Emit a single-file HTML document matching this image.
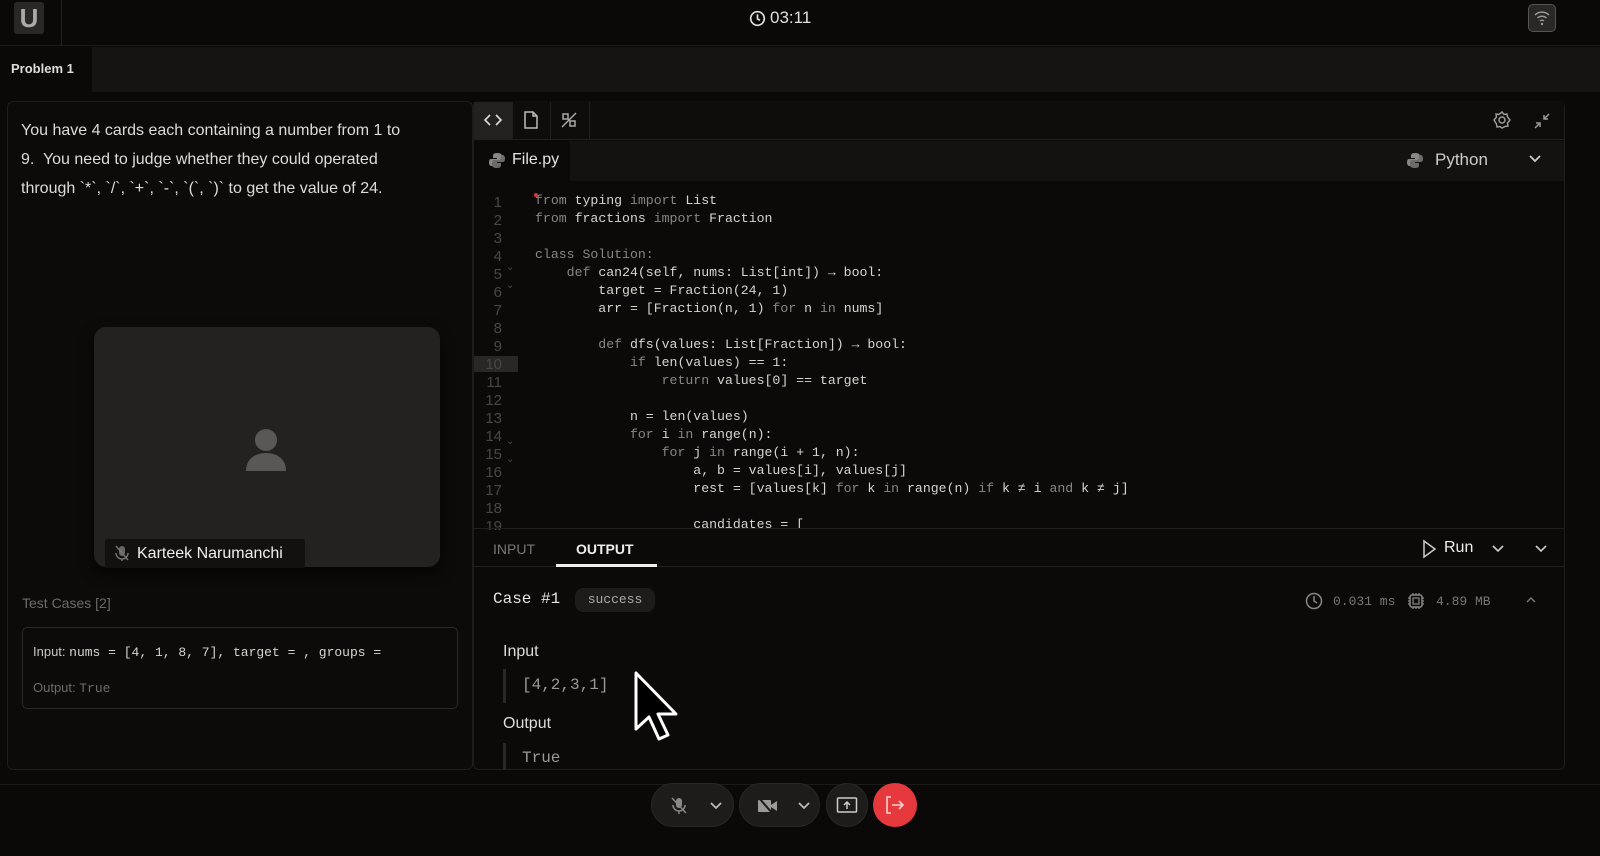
<!DOCTYPE html>
<html><head><meta charset="utf-8"><style>
*{box-sizing:border-box;margin:0;padding:0}
body{width:1600px;height:856px;background:#0b0907;color:#ddd;font-family:"Liberation Sans",sans-serif;position:relative;overflow:hidden}
.abs{position:absolute}
.mono{font-family:"Liberation Mono",monospace}
.code div{height:18px;line-height:18px;white-space:pre}
.k{color:#8a8580}
.w{color:#d8d4cf}
.ln div{height:18px;line-height:18px;color:#4a4643;font-size:15px;text-align:right}
svg{display:block}
</style></head><body>
<div class="abs" style="left:0;top:0;width:1600px;height:46px;background:#0b0907;border-bottom:1px solid #1c1a18"></div>
<div class="abs" style="left:14px;top:2px;width:30px;height:32px;background:#2a2826;border-radius:3px;color:#aaa;font-weight:bold;font-size:26px;text-align:center;line-height:32px">U</div>
<div class="abs" style="left:61px;top:0;width:1px;height:46px;background:#222"></div>
<div class="abs" style="left:749px;top:8px;font-size:17px;color:#e0e0e0;display:flex;align-items:center;gap:4px">
<svg width="17" height="17" viewBox="0 0 20 20"><circle cx="10" cy="10" r="8" fill="none" stroke="#ddd" stroke-width="2"/><path d="M10 5v5.5l3 1.5" stroke="#ddd" stroke-width="2" fill="none"/></svg>03:11</div>
<div class="abs" style="left:1528px;top:4px;width:28px;height:28px;border:1px solid #555;border-radius:5px;background:#2a2826">
<svg width="26" height="26" viewBox="0 0 26 26"><path d="M6 10a10 10 0 0 1 14 0M8.5 13a6.5 6.5 0 0 1 9 0M11 16a3 3 0 0 1 4 0" stroke="#999" stroke-width="1.5" fill="none"/><circle cx="13" cy="19" r="1.2" fill="#999"/></svg></div>
<div class="abs" style="left:92px;top:47px;width:1508px;height:45px;background:#161413"></div>
<div class="abs" style="left:11px;top:61px;font-size:13px;font-weight:bold;color:#ddd">Problem 1</div>
<div class="abs" style="left:7px;top:101px;width:466px;height:669px;border:1px solid #1f1d1b;border-radius:6px;background:#0d0b09"></div>
<div class="abs" style="left:21px;top:116px;font-size:16px;line-height:29px;color:#dcdcdc;white-space:nowrap">You have 4 cards each containing a number from 1 to<br>9.&nbsp; You need to judge whether they could operated<br>through `*`, `/`, `+`, `-`, `(`, `)` to get the value of 24.</div>
<div class="abs" style="left:94px;top:327px;width:346px;height:240px;background:#242220;border-radius:12px;box-shadow:0 6px 14px rgba(0,0,0,.7)"></div>
<svg class="abs" style="left:245px;top:427px" width="42" height="44" viewBox="0 0 42 44"><circle cx="21" cy="13" r="11" fill="#5a5856"/><path d="M1 44c0-12 9-18 20-18s20 6 20 18z" fill="#5a5856"/></svg>
<div class="abs" style="left:105px;top:539px;width:200px;height:29px;background:#121110;border-radius:2px;color:#eee;font-size:16px;line-height:29px;padding-left:32px">Karteek Narumanchi</div>
<svg class="abs" style="left:113px;top:544px" width="18" height="18" viewBox="0 0 18 18"><rect x="6" y="2" width="6" height="10" rx="3" fill="#666"/><path d="M3 9a6 6 0 0 0 12 0M9 15v2M3 2l12 14" stroke="#777" stroke-width="1.4" fill="none"/></svg>
<div class="abs" style="left:22px;top:595px;font-size:14px;color:#6e6a66">Test Cases [2]</div>
<div class="abs" style="left:22px;top:627px;width:436px;height:82px;border:1px solid #2a2826;border-radius:5px"></div>
<div class="abs" style="left:33px;top:644px;font-size:13px;color:#c8c4c0">Input: <span class="mono" style="color:#d8d4cf">nums = [4, 1, 8, 7], target = , groups =</span></div>
<div class="abs" style="left:33px;top:680px;font-size:13px;color:#6e6a66">Output: <span class="mono">True</span></div>
<div class="abs" style="left:473px;top:101px;width:1092px;height:669px;border:1px solid #1f1d1b;border-radius:6px;background:#0c0a08"></div>
<div class="abs" style="left:474px;top:101px;width:1090px;height:39px;background:#0f0d0b;border-bottom:1px solid #22201e"></div>
<div class="abs" style="left:474px;top:102px;width:38px;height:37px;background:#232120"></div>
<div class="abs" style="left:512px;top:102px;width:1px;height:37px;background:#22201e"></div>
<div class="abs" style="left:550px;top:102px;width:1px;height:37px;background:#22201e"></div>
<div class="abs" style="left:589px;top:102px;width:1px;height:37px;background:#22201e"></div>
<svg class="abs" style="left:483px;top:111px" width="20" height="18" viewBox="0 0 20 18"><path d="M7 4L2 9l5 5M13 4l5 5-5 5" stroke="#ddd" stroke-width="1.6" fill="none"/></svg>
<svg class="abs" style="left:522px;top:110px" width="18" height="20" viewBox="0 0 18 20"><path d="M3 2h8l4 4v12H3zM11 2v4h4" stroke="#bbb" stroke-width="1.5" fill="none"/></svg>
<svg class="abs" style="left:559px;top:110px" width="20" height="20" viewBox="0 0 20 20"><path d="M3 17L17 3M4 4h5v5H4zM11 11h5v5h-5z" stroke="#aaa" stroke-width="1.5" fill="none"/></svg>
<svg class="abs" style="left:1492px;top:110px" width="20" height="20" viewBox="0 0 20 20"><circle cx="10" cy="10" r="3" stroke="#999" stroke-width="1.5" fill="none"/><path d="M10 2l2 2.5 3-.5.5 3L18 10l-2.5 3 .5 3-3 .5L10 18l-2-1.5-3 .5-.5-3L2 10l2.5-3-.5-3 3 .5z" stroke="#999" stroke-width="1.5" fill="none"/></svg>
<svg class="abs" style="left:1532px;top:111px" width="20" height="20" viewBox="0 0 20 20"><path d="M3 17l5-5M4 12h4v4M17 3l-5 5M12 4v4h4" stroke="#999" stroke-width="1.5" fill="none"/></svg>
<div class="abs" style="left:474px;top:141px;width:1090px;height:40px;background:#141210"></div>
<div class="abs" style="left:474px;top:141px;width:96px;height:40px;background:#0c0a08"></div>
<svg class="abs" style="left:489px;top:152px" width="16" height="17" viewBox="0 0 16 17"><path d="M8 1c-4 0-4 2-4 3v2h4v1H2c-2 0-2 3-2 4s1 3 2 3h2v-2c0-2 1-3 3-3h4c1 0 2-1 2-2V4c0-2-2-3-5-3z" fill="#8a8785"/><path d="M8 16c4 0 4-2 4-3v-2H8v-1h6c2 0 2-3 2-4s-1-3-2-3h-2v2c0 2-1 3-3 3H5c-1 0-2 1-2 2v3c0 2 2 3 5 3z" fill="#6e6b69"/></svg>
<div class="abs" style="left:512px;top:151px;font-size:16px;color:#e4e4e4">File.py</div>
<svg class="abs" style="left:1407px;top:152px" width="16" height="17" viewBox="0 0 16 17"><path d="M8 1c-4 0-4 2-4 3v2h4v1H2c-2 0-2 3-2 4s1 3 2 3h2v-2c0-2 1-3 3-3h4c1 0 2-1 2-2V4c0-2-2-3-5-3z" fill="#8a8785"/><path d="M8 16c4 0 4-2 4-3v-2H8v-1h6c2 0 2-3 2-4s-1-3-2-3h-2v2c0 2-1 3-3 3H5c-1 0-2 1-2 2v3c0 2 2 3 5 3z" fill="#6e6b69"/></svg>
<div class="abs" style="left:1435px;top:150px;font-size:17px;color:#ccc">Python</div>
<svg class="abs" style="left:1528px;top:154px" width="14" height="10" viewBox="0 0 14 10"><path d="M2 2l5 5 5-5" stroke="#ccc" stroke-width="1.8" fill="none"/></svg>
<div class="abs" style="left:474px;top:356px;width:44px;height:16px;background:#2a2826"></div>
<div class="abs ln" style="left:474px;top:194px;width:28px">
<div>1</div><div>2</div><div>3</div><div>4</div><div>5</div><div>6</div><div>7</div><div>8</div><div>9</div><div>10</div><div>11</div><div>12</div><div>13</div><div>14</div><div>15</div><div>16</div><div>17</div><div>18</div><div style="height:12px;overflow:hidden">19</div></div>
<div class="abs" style="left:506px;top:259px;color:#4a4643;font-size:10px;line-height:18px">⌄<br>⌄</div>
<div class="abs" style="left:506px;top:433px;color:#4a4643;font-size:10px;line-height:18px">⌄<br>⌄</div>
<div class="abs" style="left:534px;top:193px;width:4px;height:4px;border-radius:2px;background:#d33"></div>
<div class="abs mono code" style="left:535px;top:192px;font-size:13.2px;height:336px;overflow:hidden">
<div><span class="k">from</span> <span class="w">typing</span> <span class="k">import</span> <span class="w">List</span></div>
<div><span class="k">from</span> <span class="w">fractions</span> <span class="k">import</span> <span class="w">Fraction</span></div>
<div> </div>
<div class="k">class Solution:</div>
<div><span class="k">    def</span> <span class="w">can24(self, nums: List[int]) → bool:</span></div>
<div class="w">        target = Fraction(24, 1)</div>
<div><span class="w">        arr = [Fraction(n, 1)</span> <span class="k">for</span> <span class="w">n</span> <span class="k">in</span> <span class="w">nums]</span></div>
<div> </div>
<div><span class="k">        def</span> <span class="w">dfs(values: List[Fraction]) → bool:</span></div>
<div><span class="k">            if</span> <span class="w">len(values) == 1:</span></div>
<div><span class="k">                return</span> <span class="w">values[0] == target</span></div>
<div> </div>
<div class="w">            n = len(values)</div>
<div><span class="k">            for</span> <span class="w">i</span> <span class="k">in</span> <span class="w">range(n):</span></div>
<div><span class="k">                for</span> <span class="w">j</span> <span class="k">in</span> <span class="w">range(i + 1, n):</span></div>
<div class="w">                    a, b = values[i], values[j]</div>
<div><span class="w">                    rest = [values[k]</span> <span class="k">for</span> <span class="w">k</span> <span class="k">in</span> <span class="w">range(n)</span> <span class="k">if</span> <span class="w">k ≠ i</span> <span class="k">and</span> <span class="w">k ≠ j]</span></div>
<div> </div>
<div class="w">                    candidates = [</div>
</div>
<div class="abs" style="left:474px;top:528px;width:1090px;height:1px;background:#22201e"></div>
<div class="abs" style="left:474px;top:566px;width:1090px;height:1px;background:#22201e"></div>
<div class="abs" style="left:493px;top:541px;font-size:14px;color:#777">INPUT</div>
<div class="abs" style="left:576px;top:541px;font-size:14px;color:#eee;font-weight:bold">OUTPUT</div>
<div class="abs" style="left:556px;top:564px;width:101px;height:3px;background:#eee"></div>
<svg class="abs" style="left:1421px;top:539px" width="16" height="20" viewBox="0 0 16 20"><path d="M3 2l11 8-11 8z" stroke="#ccc" stroke-width="1.5" fill="none"/></svg>
<div class="abs" style="left:1444px;top:539px;font-size:16px;color:#eee">Run</div>
<svg class="abs" style="left:1491px;top:544px" width="14" height="10" viewBox="0 0 14 10"><path d="M2 2l5 5 5-5" stroke="#ccc" stroke-width="1.6" fill="none"/></svg>
<svg class="abs" style="left:1534px;top:544px" width="14" height="10" viewBox="0 0 14 10"><path d="M2 2l5 5 5-5" stroke="#ccc" stroke-width="1.6" fill="none"/></svg>
<div class="abs mono" style="left:493px;top:590px;font-size:16px;color:#e4e4e4">Case #1</div>
<div class="abs mono" style="left:575px;top:588px;width:80px;height:24px;background:#1e1c1a;border-radius:8px;font-size:13px;color:#aaa;text-align:center;line-height:24px">success</div>
<svg class="abs" style="left:1305px;top:592px" width="18" height="18" viewBox="0 0 18 18"><circle cx="9" cy="9" r="7.5" stroke="#888" stroke-width="1.5" fill="none"/><path d="M9 4v5l3 2" stroke="#888" stroke-width="1.5" fill="none"/></svg>
<div class="abs mono" style="left:1333px;top:594px;font-size:13px;color:#777">0.031 ms</div>
<svg class="abs" style="left:1407px;top:592px" width="18" height="18" viewBox="0 0 18 18"><rect x="3" y="3" width="12" height="12" rx="2" stroke="#888" stroke-width="1.5" fill="none"/><rect x="6" y="6" width="6" height="6" stroke="#888" stroke-width="1.2" fill="none"/><path d="M6 1v2M9 1v2M12 1v2M6 15v2M9 15v2M12 15v2M1 6h2M1 9h2M1 12h2M15 6h2M15 9h2M15 12h2" stroke="#888" stroke-width="1.2"/></svg>
<div class="abs mono" style="left:1436px;top:594px;font-size:13px;color:#777">4.89 MB</div>
<svg class="abs" style="left:1525px;top:596px" width="12" height="8" viewBox="0 0 12 8"><path d="M2 6l4-4 4 4" stroke="#777" stroke-width="1.4" fill="none"/></svg>
<div class="abs" style="left:503px;top:643px;font-size:16px;color:#ddd">Input</div>
<div class="abs" style="left:503px;top:669px;width:3px;height:34px;background:#2a2826"></div>
<div class="abs mono" style="left:522px;top:676px;font-size:16px;color:#999">[4,2,3,1]</div>
<div class="abs" style="left:503px;top:715px;font-size:16px;color:#ddd">Output</div>
<div class="abs" style="left:503px;top:743px;width:3px;height:27px;background:#2a2826"></div>
<div class="abs mono" style="left:522px;top:749px;font-size:16px;color:#999">True</div>
<svg class="abs" style="left:633px;top:670px" width="50" height="72" viewBox="0 0 50 72"><path d="M3 3v56l13-12 10 22 9-4-10-21h18z" fill="#000" stroke="#fff" stroke-width="3" stroke-linejoin="round"/></svg>
<div class="abs" style="left:0;top:784px;width:1600px;height:1px;background:#1c1a18"></div>
<div class="abs" style="left:651px;top:783px;width:83px;height:44px;border-radius:22px;background:#1e1c1a;border:1px solid #2a2826"></div>
<svg class="abs" style="left:670px;top:796px" width="18" height="20" viewBox="0 0 18 20"><rect x="6" y="2" width="6" height="10" rx="3" fill="#888"/><path d="M3 9a6 6 0 0 0 12 0M9 15v3M2 2l14 15" stroke="#888" stroke-width="1.5" fill="none"/></svg>
<svg class="abs" style="left:709px;top:801px" width="14" height="10" viewBox="0 0 14 10"><path d="M2 2l5 5 5-5" stroke="#bbb" stroke-width="1.8" fill="none"/></svg>
<div class="abs" style="left:739px;top:783px;width:81px;height:44px;border-radius:22px;background:#1e1c1a;border:1px solid #2a2826"></div>
<svg class="abs" style="left:757px;top:797px" width="22" height="18" viewBox="0 0 22 18"><rect x="1" y="3" width="13" height="12" rx="1" fill="#999"/><path d="M14 8l6-4v10l-6-4z" fill="#999"/><path d="M2 1l14 16" stroke="#1e1c1a" stroke-width="2"/></svg>
<svg class="abs" style="left:797px;top:801px" width="14" height="10" viewBox="0 0 14 10"><path d="M2 2l5 5 5-5" stroke="#bbb" stroke-width="1.8" fill="none"/></svg>
<div class="abs" style="left:826px;top:783px;width:42px;height:44px;border-radius:21px;background:#1e1c1a;border:1px solid #2a2826"></div>
<svg class="abs" style="left:836px;top:796px" width="22" height="18" viewBox="0 0 22 18"><rect x="1.5" y="2" width="19" height="14" rx="1" stroke="#ccc" stroke-width="1.5" fill="none"/><path d="M11 13V6M8 9l3-3 3 3" stroke="#ccc" stroke-width="1.5" fill="none"/></svg>
<div class="abs" style="left:873px;top:783px;width:44px;height:44px;border-radius:22px;background:#e5393e"></div>
<svg class="abs" style="left:884px;top:795px" width="22" height="20" viewBox="0 0 22 20"><path d="M7 2H3v16h4M8 10h11M15 6l4 4-4 4" stroke="#f2d0d0" stroke-width="1.6" fill="none"/></svg>
</body></html>
